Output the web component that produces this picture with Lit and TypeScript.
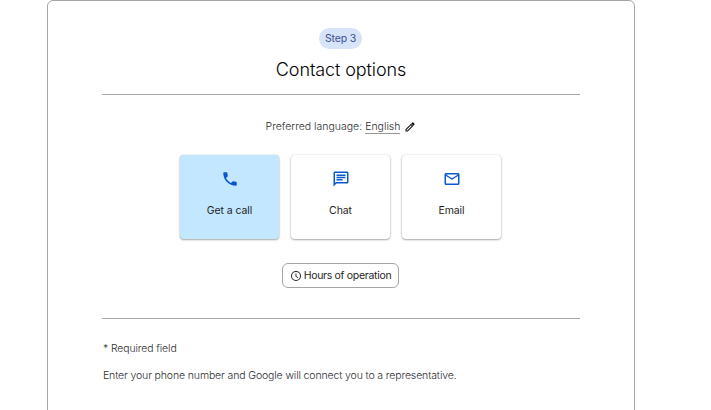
import { LitElement, html, css, svg } from "lit";
import { customElement } from "lit/decorators.js";
import { classMap } from "lit/directives/class-map.js";

const phone = svg`<path d="M6.62 10.79c1.44 2.83 3.76 5.14 6.59 6.59l2.2-2.2c.27-.27.67-.36 1.02-.24 1.12.37 2.33.57 3.57.57.55 0 1 .45 1 1V20c0 .55-.45 1-1 1-9.39 0-17-7.61-17-17 0-.55.45-1 1-1h3.5c.55 0 1 .45 1 1 0 1.25.2 2.45.57 3.57.11.35.03.74-.25 1.02l-2.2 2.2z"/>`;
const chat = svg`<path d="M4 4h16v12H5.17L4 17.17V4m0-2c-1.1 0-1.99.9-1.99 2L2 22l4-4h14c1.1 0 2-.9 2-2V4c0-1.1-.9-2-2-2H4zm2 10h8v2H6v-2zm0-3h12v2H6V9zm0-3h12v2H6V6z"/>`;
const mail = svg`<path d="M22 6c0-1.1-.9-2-2-2H4c-1.1 0-2 .9-2 2v12c0 1.100.9 2 2 2h16c1.100 0 2-.9 2-2V6zm-2 0l-8 5-8-5h16zm0 12H4V8l8 5 8-5v10z"/>`;
const pencil = svg`<path d="M3 16.500V21h4.500L18.500 10 14 5.500 3 16.500zM6.500 19H5v-1.500l9-9 1.500 1.500-9 9zM21 5.500L18.500 3a1.200 1.200 0 0 0-1.700 0L14.500 5.200l4.300 4.300L21 7.200a1.200 1.200 0 0 0 0-1.700z"/>`;
const clock = svg`<path d="M12 2a10 10 0 1 0 0 20 10 10 0 0 0 0-20zm0 18a8 8 0 1 1 0-16 8 8 0 0 1 0 16zm.8-13H11v5.500l4.500 4.200 1.200-1.300-3.900-3.600V7z"/>`;

const options = [
  { label: "Get a call", icon: phone, selected: true },
  { label: "Chat", icon: chat, selected: false },
  { label: "Email", icon: mail, selected: false },
];

@customElement("app-root")
export class AppRoot extends LitElement {
  static styles = css`
    :host {
      display: block;
      height: 410px;
      overflow: hidden;
      background: #fff;
      font: 300 10.5px/16px Inter, Roboto, sans-serif;
      color: #2c2d30;
    }
    .panel {
      box-sizing: border-box;
      width: 588px;
      height: 440px;
      margin-left: 47px;
      padding: 27px 54px 0;
      border: 1px solid #a6a6a6;
      border-radius: 6px;
      display: flex;
      flex-direction: column;
      align-items: center;
    }
    svg { display: block; fill: currentColor; flex: none; }
    .step {
      box-sizing: border-box;
      width: 43px;
      height: 21px;
      margin-right: 1px;
      border-radius: 11px;
      background: #d7e3f8;
      color: #3c4f94;
      font-weight: 400;
      line-height: 22px;
      text-align: center;
      white-space: nowrap;
      letter-spacing: -0.2px;
    }
    h1 {
      margin: 8px 0 11px;
      font-size: 18px;
      line-height: 26px;
      font-weight: 300;
      color: #000;
      letter-spacing: -0.1px;
      white-space: nowrap;
    }
    .rule { width: 478px; height: 1px; background: #a6a6a6; flex: none; }
    .language {
      display: flex;
      height: 16px;
      margin: 24px 0 20px;
      white-space: nowrap;
    }
    .value {
      height: 14px;
      margin: 0 4px 0 3px;
      border-bottom: 1px solid #999;
    }
    .language svg { width: 12px; height: 12px; margin-top: 2px; color: #111; }
    .options { display: flex; gap: 12px; margin-right: 1px; }
    .option {
      width: 99px;
      height: 84px;
      border-radius: 4px;
      box-shadow: 0 1px 2px rgba(0, 0, 0, 0.32), 0 0 2px rgba(0, 0, 0, 0.16);
      display: flex;
      flex-direction: column;
      align-items: center;
      color: #1f1f1f;
      font-weight: 400;
      letter-spacing: -0.1px;
    }
    .option.selected { background: #c2e7ff; }
    .option svg { width: 18px; height: 18px; margin: 15px 0 15px; color: #0b57d0; }
    .hours {
      box-sizing: border-box;
      width: 117px;
      height: 25px;
      margin: 24px 1px 30px 0;
      border: 1px solid #a6a6a6;
      border-radius: 6px;
      display: flex;
      align-items: center;
      justify-content: center;
      gap: 2px;
      color: #1f1f1f;
      font-weight: 400;
      white-space: nowrap;
      letter-spacing: -0.3px;
    }
    .hours svg { width: 12px; height: 12px; }
    .notes { width: 477px; padding-left: 1px; margin-top: 22px; letter-spacing: -0.13px; }
    p { margin: 0 0 11px; }
  `;

  render() {
    return html`
      <main class="panel">
        <div class="step">Step 3</div>
        <h1>Contact options</h1>
        <div class="rule"></div>
        <div class="language">
          <span>Preferred language:</span><span class="value">English</span>
          <svg viewBox="0 0 24 24">${pencil}</svg>
        </div>
        <div class="options">
          ${options.map(
            (o) => html`<div class=${classMap({ option: true, selected: o.selected })}>
              <svg viewBox="0 0 24 24">${o.icon}</svg><span>${o.label}</span>
            </div>`
          )}
        </div>
        <div class="hours"><svg viewBox="0 0 24 24">${clock}</svg><span>Hours of operation</span></div>
        <div class="rule"></div>
        <div class="notes">
          <p>* Required field</p>
          <p>Enter your phone number and Google will connect you to a representative.</p>
        </div>
      </main>
    `;
  }
}
